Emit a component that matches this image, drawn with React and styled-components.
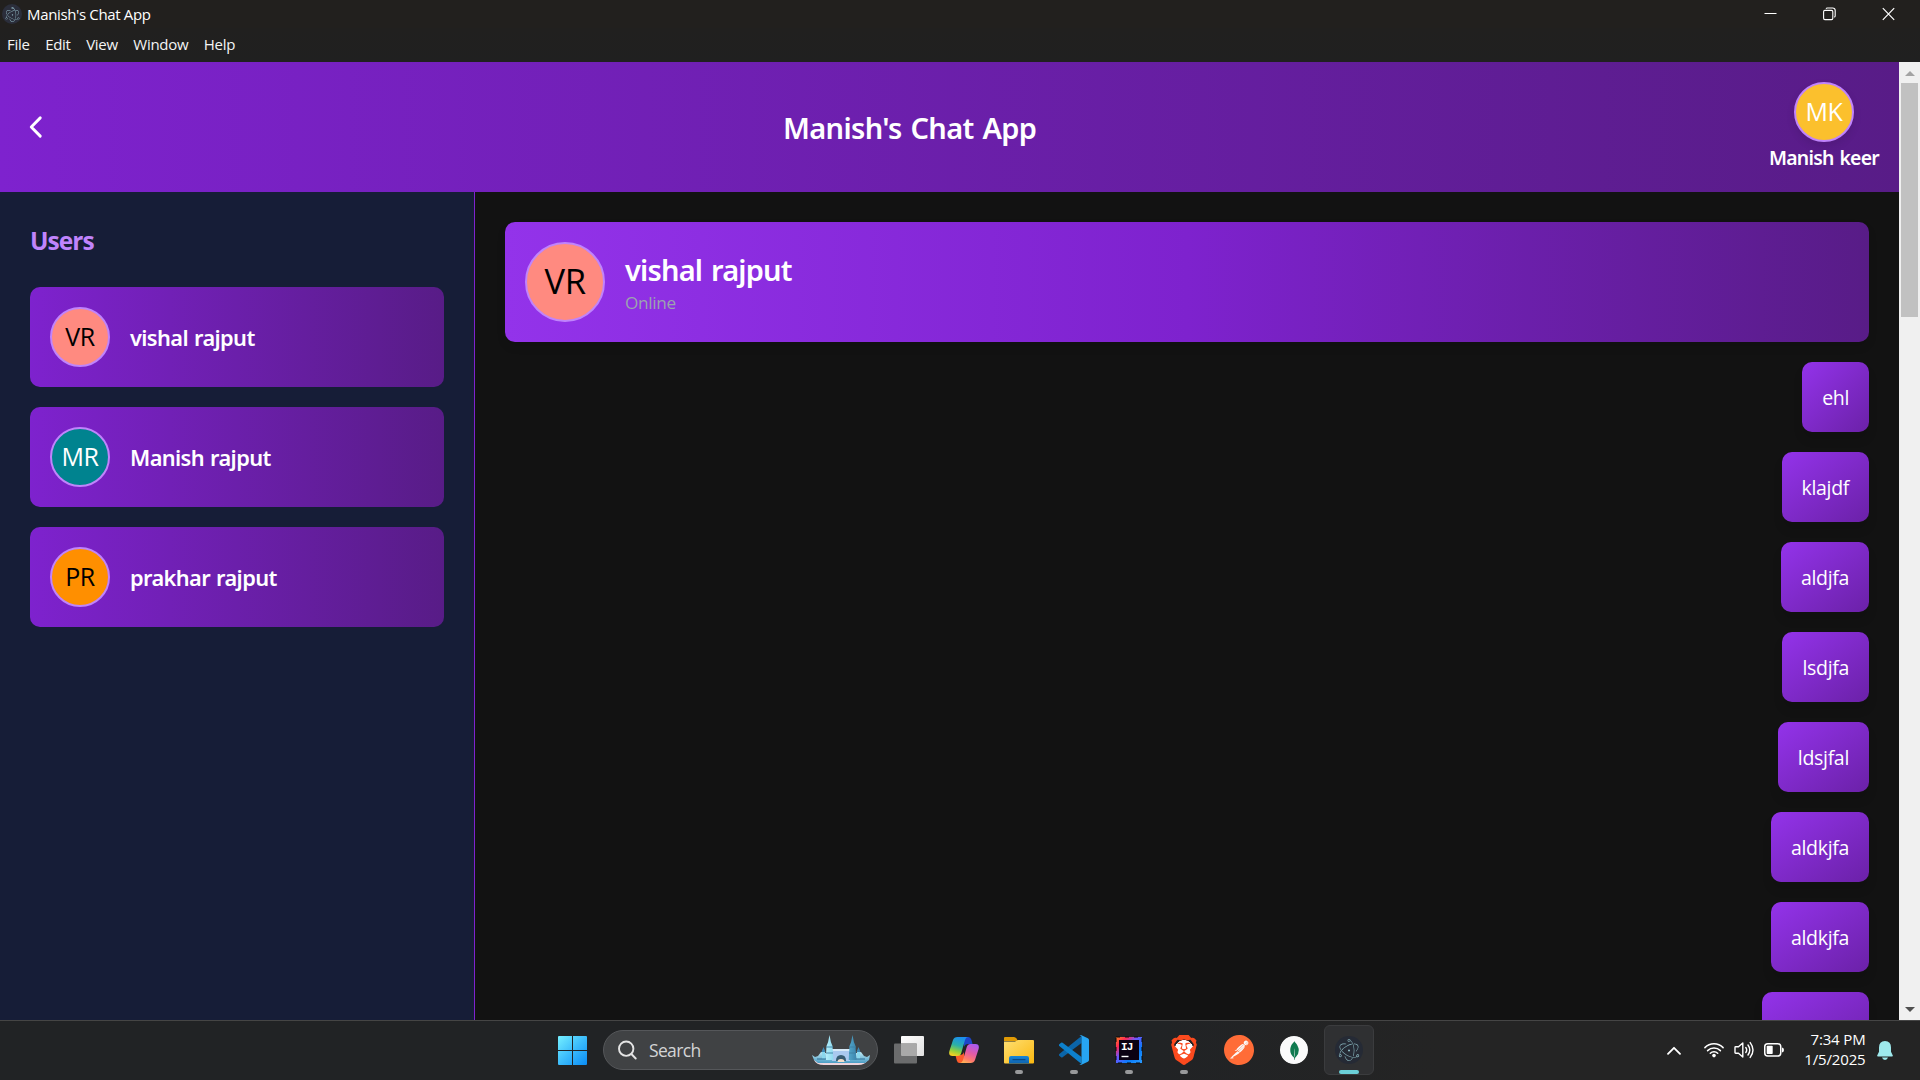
import React from "react";
import styled, { createGlobalStyle } from "styled-components";
import { SiElectron, SiBrave, SiPostman, SiMongodb } from "react-icons/si";

const GlobalStyle = createGlobalStyle`
  *, *::before, *::after { box-sizing: border-box; }
  body {
    margin: 0;
    background: #121212;
    font-family: "Open Sans", "Noto Sans", sans-serif;
    color: #fff;
    overflow: hidden;
  }
  svg { display: block; flex: none; }
  h1, h2, h3, p { margin: 0; }
`;

const Desktop = styled.div`
  width: 1920px;
  height: 1080px;
  display: flex;
  flex-direction: column;
  overflow: hidden;
`;

/* ---------- window frame ---------- */
const TitleBar = styled.div`
  height: 28px;
  flex: none;
  display: flex;
  align-items: center;
  background: #22201e;
`;
const AppBadge = styled.span`
  width: 20px;
  height: 20px;
  margin-left: 2px;
  border-radius: 50%;
  display: grid;
  place-items: center;
  background: #2b2e3b;
  color: #9bc4cf;
`;
const WindowTitle = styled.span`
  margin-left: 5px;
  font-size: 15px;
  line-height: 28px;
  letter-spacing: -0.35px;
`;
const WindowControls = styled.div`
  margin-left: auto;
  display: flex;
  gap: 46px;
  padding-right: 25px;
`;
const MenuBar = styled.nav`
  height: 34px;
  flex: none;
  display: flex;
  gap: 15.6px;
  padding-left: 7px;
  background: linear-gradient(#21201f, #202020);
`;
const MenuItem = styled.span`
  font-size: 15px;
  line-height: 33px;
  letter-spacing: -0.3px;
  color: #f4f4f4;
`;

/* ---------- app ---------- */
const Viewport = styled.div`
  height: 958px;
  flex: none;
  display: flex;
`;
const Page = styled.div`
  flex: 1;
  display: flex;
  flex-direction: column;
  min-width: 0;
`;
const Header = styled.header`
  height: 130px;
  flex: none;
  padding: 20px;
  display: flex;
  align-items: center;
  justify-content: space-between;
  background: linear-gradient(to right, #7e22ce, #581c87);
`;
const AppTitle = styled.h1`
  width: 254px;
  padding-top: 2px;
  white-space: nowrap;
  font-family: "Noto Sans", "Open Sans", sans-serif;
  font-size: 29px;
  line-height: 40px;
  font-weight: 600;
  letter-spacing: -0.65px;
  word-spacing: 2px;
`;
const Profile = styled.div`
  width: 110px;
  height: 90px;
  display: flex;
  flex-direction: column;
  align-items: center;
`;
const ProfileName = styled.span`
  padding-top: 1px;
  white-space: nowrap;
  font-family: "Noto Sans", "Open Sans", sans-serif;
  font-size: 19.4px;
  line-height: 30px;
  font-weight: 600;
  letter-spacing: -0.75px;
  word-spacing: 1.5px;
`;
const Avatar = styled.div`
  width: ${(p) => p.$size}px;
  height: ${(p) => p.$size}px;
  flex: none;
  display: flex;
  align-items: center;
  justify-content: center;
  padding-bottom: ${(p) => (p.$size > 60 ? 2 : 1)}px;
  border: 2px solid #c084fc;
  border-radius: 50%;
  background: ${(p) => p.$bg};
  color: ${(p) => p.$fg};
  font-size: ${(p) => (p.$size > 60 ? 34.5 : 25)}px;
  letter-spacing: -0.4px;
  line-height: 1;
  box-shadow: ${(p) => (p.$raised ? "0 4px 8px rgba(0, 0, 0, 0.1)" : "none")};
`;
const Body = styled.div`
  flex: 1;
  display: flex;
  min-height: 0;
`;
const Sidebar = styled.aside`
  width: 475px;
  flex: none;
  padding: 30px;
  background: #161d37;
  border-right: 1px solid #7e22ce;
`;
const SidebarTitle = styled.h2`
  height: 35px;
  padding-top: 1px;
  font-size: 24.5px;
  line-height: 35px;
  margin-bottom: 30px;
  font-weight: 700;
  letter-spacing: -0.95px;
  color: #c084fc;
`;
const UserList = styled.div`
  display: flex;
  flex-direction: column;
  gap: 20px;
`;
const UserCard = styled.div`
  height: 100px;
  padding: 20px;
  display: flex;
  align-items: center;
  gap: 20px;
  border-radius: 10px;
  background: linear-gradient(to right, #7e22ce, #581c87);
`;
const UserName = styled.span`
  padding-top: 1px;
  font-family: "Noto Sans", "Open Sans", sans-serif;
  font-size: 21.8px;
  font-weight: 600;
  letter-spacing: -0.62px;
  word-spacing: 1px;
`;
const Chat = styled.main`
  flex: 1;
  padding: 30px 30px 0;
  display: flex;
  flex-direction: column;
  align-items: flex-end;
  gap: 20px;
  overflow: hidden;
  background: #121212;
`;
const ChatHeader = styled.section`
  align-self: stretch;
  height: 120px;
  flex: none;
  padding: 20px;
  display: flex;
  align-items: center;
  gap: 20px;
  border-radius: 10px;
  background: linear-gradient(to right, #9333ea, #7e22ce, #581c87);
  box-shadow: 0 5px 8px rgba(0, 0, 0, 0.1);
`;
const Contact = styled.div`
  padding-bottom: 1px;
`;
const ContactName = styled.h3`
  font-family: "Noto Sans", "Open Sans", sans-serif;
  font-size: 29px;
  line-height: 42px;
  font-weight: 600;
  letter-spacing: -0.8px;
  word-spacing: 2px;
`;
const ContactStatus = styled.p`
  padding-top: 1px;
  font-size: 17.2px;
  line-height: 22px;
  letter-spacing: -0.35px;
  color: #9ca3af;
`;
const Message = styled.div`
  height: 70px;
  width: ${(p) => (p.$width ? `${p.$width}px` : "auto")};
  flex: none;
  padding: 21px 20px 19px;
  border-radius: 10px;
  font-size: 19.5px;
  line-height: 30px;
  letter-spacing: -0.32px;
  background: linear-gradient(to bottom right, #9333ea, #6b21a8);
  box-shadow: 0 8px 10px rgba(0, 0, 0, 0.1);
`;
const Scrollbar = styled.div`
  width: 21px;
  flex: none;
  display: flex;
  flex-direction: column;
  align-items: center;
  padding: 9px 0 8px 0;
  background: #f0f0f0;
`;
const ScrollThumb = styled.div`
  width: 17px;
  height: 234px;
  margin: 7px 0 auto;
  background: #c1c1c1;
`;

/* ---------- taskbar ---------- */
const Taskbar = styled.footer`
  height: 60px;
  flex: none;
  padding: 0 25px 0 545px;
  display: flex;
  align-items: center;
  background: linear-gradient(to right, #212325 0%, #212325 60%, #242424 75%);
  box-shadow: inset 0 1px 0 #454545;
`;
const Slot = styled.div`
  position: relative;
  width: 55px;
  height: 60px;
  flex: none;
  display: grid;
  place-items: center;
`;
const ActiveTile = styled.div`
  width: 50px;
  height: 50px;
  display: grid;
  place-items: center;
  border-radius: 6px;
  border: 1px solid #3b3c3e;
  background: #2f3032;
`;
const TileIcon = styled.span`
  width: 28px;
  height: 28px;
  border-radius: 50%;
  display: grid;
  place-items: center;
  background: #252a35;
  color: #8cb9c1;
`;
const RunMark = styled.i`
  position: absolute;
  bottom: 6px;
  left: 50%;
  transform: translateX(-50%);
  width: ${(p) => (p.$active ? 20 : 8)}px;
  height: 4px;
  border-radius: 2px;
  background: ${(p) => (p.$active ? "#6bd0d8" : "#98999b")};
`;
const SearchBox = styled.div`
  width: 275px;
  height: 40px;
  margin: 0 3.5px 0 3px;
  padding: 0 7px 0 14px;
  display: flex;
  align-items: center;
  border-radius: 20px;
  border: 1px solid #55575a;
  background: #404244;
`;
const SearchLabel = styled.span`
  margin-left: 12px;
  font-size: 17.5px;
  letter-spacing: -0.65px;
  color: #d3d4d5;
`;
const SearchArt = styled.span`
  margin-left: auto;
`;
const DiscIcon = styled.span`
  width: ${(p) => p.$size}px;
  height: ${(p) => p.$size}px;
  border-radius: 50%;
  display: grid;
  place-items: center;
  background: radial-gradient(circle, #fafafa ${(p) => p.$fill}px, transparent ${(p) => p.$fill + 0.7}px);
  color: ${(p) => p.$color};
`;
const BraveIcon = styled.span`
  display: grid;
  place-items: center;
  width: 30px;
  height: 30px;
  color: #fb4a1e;
  background: radial-gradient(circle at 50% 48%, #fff 9px, transparent 9.5px);
`;
const Tray = styled.div`
  margin-left: auto;
  display: flex;
  align-items: center;
`;
const TrayIcon = styled.span`
  margin-right: ${(p) => p.$gap}px;
`;
const Clock = styled.div`
  width: 64px;
  margin-right: 11.5px;
  display: flex;
  flex-direction: column;
  align-items: flex-end;
  padding-bottom: 2px;
  font-size: 15px;
  line-height: 20px;
  letter-spacing: -0.15px;
`;

/* ---------- drawings ---------- */
const stroke = { fill: "none", stroke: "#fff", strokeLinecap: "round", strokeLinejoin: "round" };

const BackIcon = () => (
  <svg width="31" height="30" viewBox="0 0 24.8 24" {...stroke} strokeWidth="2.3">
    <path d="M16.200 19.300 9 12l7.200-7.300" />
  </svg>
);
const MinimizeIcon = () => (
  <svg width="13" height="14" viewBox="0 0 13 14"><path d="M0.5 6.5h12" stroke="#fff" /></svg>
);
const RestoreIcon = () => (
  <svg width="13" height="14" viewBox="0 0 13 14" fill="none" stroke="#fff" strokeWidth="1.1">
    <rect x="0.6" y="3.4" width="9.2" height="9.2" rx="1.3" />
    <path d="M3 1.6Q3.4 1 4.4 1h5.2q2.6 0 2.6 2.6v5.2q0 1-.9 1.5" />
  </svg>
);
const CloseIcon = () => (
  <svg width="13" height="14" viewBox="0 0 13 14"><path d="m.8 1.2 11.4 11.6M12.2 1.2.8 12.8" stroke="#fff" strokeWidth="1.2" /></svg>
);
const ScrollArrow = ({ down }) => (
  <svg width="10" height="5" viewBox="0 0 10 5">
    <path d={down ? "M0 0h10L5 5z" : "M0 5h10L5 0z"} fill={down ? "#505050" : "#a3a3a3"} />
  </svg>
);
const StartIcon = () => (
  <svg width="29" height="29" viewBox="0 0 29 29">
    <defs>
      <linearGradient id="win" x1="0" y1="0" x2="29" y2="29" gradientUnits="userSpaceOnUse">
        <stop stopColor="#75f0ff" /><stop offset="0.5" stopColor="#3cbcfb" /><stop offset="1" stopColor="#0a8cf5" />
      </linearGradient>
    </defs>
    <path fill="url(#win)" d="M1 0h13v14H0V1q0-1 1-1zM15 0h13q1 0 1 1v13H15zM0 15h14v14H1q-1 0-1-1zM15 15h14v13q0 1-1 1H15z" />
  </svg>
);
const SearchIcon = () => (
  <svg width="19" height="20" viewBox="0 0 19 20" fill="none" stroke="#e4e4e4" strokeWidth="1.9" strokeLinecap="round">
    <circle cx="8.2" cy="8.7" r="7.2" /><path d="m13.4 14 4.3 4.5" />
  </svg>
);
const CastleArt = () => (
  <svg width="58" height="32" viewBox="0 0 58 32">
    <defs>
      <linearGradient id="tower" x1="0" x2="1">
        <stop stopColor="#b5effb" /><stop offset="0.5" stopColor="#68c5e4" /><stop offset="1" stopColor="#3c86ae" />
      </linearGradient>
      <linearGradient id="bridge" x1="0" y1="0" x2="0" y2="1">
        <stop stopColor="#bfeaf6" /><stop offset="1" stopColor="#4b9dc4" />
      </linearGradient>
    </defs>
    <path d="M2 26q27 3 54 0-3 5-10 5H12q-8 0-10-5z" fill="#eed5dc" />
    <path d="M0 21l3 2 3-1 3-4 5 1 3 2h24l3-2 5-1 3 4 3 1 3-2-1 5-4 3H6l-4-3z" fill="url(#bridge)" />
    <path d="M10 17h3v8h-3zM45 17h3v8h-3z" fill="#8ad8ee" />
    <path d="M11.5 13l2 5h-4zM46.500 13l2 5h-4z" fill="#3e88b6" />
    <path d="M20 16h18v11h-4q0-6-5-6t-5 6h-4z" fill="#a9c9ef" />
    <path d="M20 15h18v2H20z" fill="#d7eaf8" />
    <path d="M24 27q0-6 5-6t5 6z" fill="#375b71" /><path d="M25.500 28q0-3 3.500-3t3.500 3z" fill="#f3dfcb" />
    <path d="M17.500 1l1.400 7 1.600 4 .8 14h-7.600l.8-14 1.600-4zM40.500 1l1.400 7 1.600 4 .8 14h-7.600l.8-14 1.600-4z" fill="url(#tower)" />
    <path d="M14 13h7M14 19h7M37 13h7M37 19h7" stroke="#3d7fa3" strokeWidth="0.900" />
    <path d="M5 25h9M44 25h9" stroke="#2f6f96" strokeWidth="1.200" />
  </svg>
);
const TaskViewIcon = () => (
  <svg width="30" height="30" viewBox="0 0 30 30">
    <defs><linearGradient id="tv" x1="0" y1="0" x2="1" y2="1"><stop stopColor="#fff" /><stop offset="1" stopColor="#e0e0e0" /></linearGradient></defs>
    <rect x="7" y="1" width="23" height="20" rx="1" fill="url(#tv)" />
    <rect x="0" y="8.500" width="23" height="20" rx="1" fill="#6b6c6d" />
    <path d="M7 8.500h15q1 0 1 1V21H8q-1 0-1-1z" fill="#a9a9a9" />
  </svg>
);
const CopilotIcon = () => (
  <svg width="30" height="28" viewBox="0 0 30 28">
    <defs>
      <linearGradient id="cpA" x1="0.600" y1="0" x2="0.300" y2="1"><stop stopColor="#1b8df0" /><stop offset="0.450" stopColor="#2bb0a8" /><stop offset="0.750" stopColor="#8fd03f" /><stop offset="1" stopColor="#f7cf22" /></linearGradient>
      <linearGradient id="cpB" x1="0.700" y1="0" x2="0.300" y2="1"><stop stopColor="#a95af0" /><stop offset="0.450" stopColor="#e25aa6" /><stop offset="0.800" stopColor="#ff7a6b" /><stop offset="1" stopColor="#ffb057" /></linearGradient>
    </defs>
    <path d="M15 1h4.500q2 0 2.800 2.500L23.600 8H19q-3 0-4 3z" fill="#1c45c9" />
    <path d="M15 27h-4.500q-2 0-2.700-2.500L6.400 19H11q3 0 4-3z" fill="#fb5b2b" />
    <path d="M8.500 1H19q-2.200 0-3 3l-3.600 12.500Q11.600 20 8.500 20H3.500Q-.8 20 .4 15L4 4Q5 1 8.500 1z" fill="url(#cpA)" />
    <path d="M21.500 27H11q2.200 0 3-3l3.600-12.500Q18.400 8 21.500 8h5Q30.800 8 29.600 13L26 24q-1 3-4.500 3z" fill="url(#cpB)" />
  </svg>
);
const FolderIcon = () => (
  <svg width="30" height="28" viewBox="0 0 30 28">
    <defs>
      <linearGradient id="fold" x1="0" y1="0" x2="1" y2="1"><stop stopColor="#ffdf72" /><stop offset="1" stopColor="#fbb810" /></linearGradient>
      <linearGradient id="foldTab" x1="0" y1="0" x2="0" y2="1"><stop stopColor="#1a87d8" /><stop offset="1" stopColor="#0d62ae" /></linearGradient>
    </defs>
    <path d="M1 1h9q1.500 0 2.500 1.500L14 5H0V2q0-1 1-1z" fill="#e09a05" />
    <path d="M0 5.500h11L14 4h15q1 0 1 1v21.500q0 1-1 1H1q-1 0-1-1z" fill="url(#fold)" />
    <path d="M5 27.500V22q0-2 2-2h16q2 0 2 2v5.500z" fill="url(#foldTab)" />
    <path d="M9 23.700h12" stroke="#0b4a87" strokeWidth="1.200" strokeLinecap="round" />
  </svg>
);
const VsCodeIcon = () => (
  <svg width="30" height="30" viewBox="0 0 100 100">
    <path d="M75 3 1 63a4 4 0 0 0 0 6l6 5a4 4 0 0 0 5 0L75 27z" fill="#0b65a9" />
    <path d="M75 97 1 37a4 4 0 0 1 0-6l6-5a4 4 0 0 1 5 0l63 47z" fill="#0d80cc" />
    <path d="M75 99a6 6 0 0 1-7-1q6 1 7-4V6q-1-5-7-4a6 6 0 0 1 7-1l21 10q4 2 4 6v66q0 4-4 6z" fill="#27a5f2" />
  </svg>
);
const IdeaText = styled.text`
  font-family: "Liberation Mono", monospace;
  font-size: 11px;
  font-weight: 700;
  letter-spacing: -0.8px;
`;
const IdeaIcon = () => (
  <svg width="28" height="28" viewBox="0 0 28 28">
    <defs><linearGradient id="ij" x1="0" y1="0" x2="1" y2="1"><stop stopColor="#fc801d" /><stop offset="0.220" stopColor="#fe2857" /><stop offset="0.420" stopColor="#6b57ff" /><stop offset="0.700" stopColor="#087cfa" /><stop offset="1" stopColor="#2a9bff" /></linearGradient></defs>
    <rect x="1" y="1" width="26" height="26" fill="url(#ij)" />
    <rect x="1" y="1" width="26" height="26" fill="none" stroke="#08080f" strokeWidth="1" strokeDasharray="4 5" />
    <rect x="4" y="4" width="20" height="20" fill="#0b0212" />
    <IdeaText x="6" y="14" fill="#fff">IJ</IdeaText>
    <path d="M6.500 20.500h7" stroke="#fff" strokeWidth="1.400" />
  </svg>
);
const ChevronUp = () => (
  <svg width="14" height="9" viewBox="0 0 14 9" {...stroke} strokeWidth="1.800"><path d="m1 7.800 6-6 6 6" /></svg>
);
const WifiIcon = () => (
  <svg width="20" height="16" viewBox="0 0 20 16" {...stroke} strokeWidth="1.500">
    <path d="M.9 5.600a12.900 12.900 0 0 1 18.200 0M3.600 8.600a9 9 0 0 1 12.800 0M6.300 11.300a5.200 5.200 0 0 1 7.400 0" />
    <circle cx="10" cy="13.600" r="1.800" fill="#fff" stroke="none" />
  </svg>
);
const VolumeIcon = () => (
  <svg width="20" height="18" viewBox="0 0 20 18" {...stroke} strokeWidth="1.400">
    <path d="M1 6.500q0-.7.700-.7h2.800L8.800 2v14l-4.300-3.800H1.700q-.7 0-.7-.7z" />
    <path d="M11.800 6.500q1.800 2.500 0 5M14 4q3.600 5 0 10M16.200 1.600q5.600 7.400 0 14.800" />
  </svg>
);
const BatteryIcon = () => (
  <svg width="20" height="14" viewBox="0 0 20 14">
    <rect x="0.750" y="0.750" width="16" height="12.300" rx="3" fill="none" stroke="#fff" strokeWidth="1.500" />
    <rect x="2.700" y="2.800" width="6" height="8.200" rx="0.800" fill="#fff" />
    <path d="M18 4.500q2 .3 2 2.500t-2 2.500z" fill="#fff" />
  </svg>
);
const BellIcon = () => (
  <svg width="16" height="19" viewBox="0 0 16 19" fill="#9ee9ec">
    <path d="M8 0q6 .3 6 6.500v4.300l1.800 3.600q.3 1-.8 1H1q-1.100 0-.8-1L2 10.800V6.500Q2 .3 8 0zM5 16.600h6q-.7 2.400-3 2.400t-3-2.400z" />
  </svg>
);

/* ---------- data ---------- */
const menu = ["File", "Edit", "View", "Window", "Help"];
const users = [
  { name: "vishal rajput", initials: "VR", bg: "#ff8a80", fg: "#000" },
  { name: "Manish rajput", initials: "MR", bg: "#00838f", fg: "#fff" },
  { name: "prakhar rajput", initials: "PR", bg: "#ff8f00", fg: "#000" },
];
const messages = ["ehl", "klajdf", "aldjfa", "lsdjfa", "ldsjfal", "aldkjfa", "aldkjfa"];

export default function App() {
  return (
    <Desktop>
      <GlobalStyle />
      <TitleBar>
        <AppBadge><SiElectron size={15} /></AppBadge>
        <WindowTitle>Manish's Chat App</WindowTitle>
        <WindowControls><MinimizeIcon /><RestoreIcon /><CloseIcon /></WindowControls>
      </TitleBar>
      <MenuBar>{menu.map((m) => <MenuItem key={m}>{m}</MenuItem>)}</MenuBar>
      <Viewport>
        <Page>
          <Header>
            <BackIcon />
            <AppTitle>Manish's Chat App</AppTitle>
            <Profile>
              <Avatar $raised $size={60} $bg="#fbc02d" $fg="#fff">MK</Avatar>
              <ProfileName>Manish keer</ProfileName>
            </Profile>
          </Header>
          <Body>
            <Sidebar>
              <SidebarTitle>Users</SidebarTitle>
              <UserList>
                {users.map((u) => (
                  <UserCard key={u.name}>
                    <Avatar $size={60} $bg={u.bg} $fg={u.fg}>{u.initials}</Avatar>
                    <UserName>{u.name}</UserName>
                  </UserCard>
                ))}
              </UserList>
            </Sidebar>
            <Chat>
              <ChatHeader>
                <Avatar $size={80} $bg="#ff8a80" $fg="#000">VR</Avatar>
                <Contact>
                  <ContactName>vishal rajput</ContactName>
                  <ContactStatus>Online</ContactStatus>
                </Contact>
              </ChatHeader>
              {messages.map((m, i) => <Message key={i}>{m}</Message>)}
              <Message $width={107} />
            </Chat>
          </Body>
        </Page>
        <Scrollbar>
          <ScrollArrow />
          <ScrollThumb />
          <ScrollArrow down />
        </Scrollbar>
      </Viewport>
      <Taskbar>
        <Slot><StartIcon /></Slot>
        <SearchBox>
          <SearchIcon />
          <SearchLabel>Search</SearchLabel>
          <SearchArt><CastleArt /></SearchArt>
        </SearchBox>
        <Slot><TaskViewIcon /></Slot>
        <Slot><CopilotIcon /></Slot>
        <Slot><FolderIcon /><RunMark /></Slot>
        <Slot><VsCodeIcon /><RunMark /></Slot>
        <Slot><IdeaIcon /><RunMark /></Slot>
        <Slot><BraveIcon><SiBrave size={30} /></BraveIcon><RunMark /></Slot>
        <Slot><DiscIcon $size={30} $fill={13} $color="#ff6c37"><SiPostman size={30} /></DiscIcon></Slot>
        <Slot><DiscIcon $size={28} $fill={14} $color="#0f7a4f"><SiMongodb size={19} /></DiscIcon></Slot>
        <Slot>
          <ActiveTile><TileIcon><SiElectron size={22} /></TileIcon></ActiveTile>
          <RunMark $active />
        </Slot>
        <Tray>
          <TrayIcon $gap={23}><ChevronUp /></TrayIcon>
          <TrayIcon $gap={10}><WifiIcon /></TrayIcon>
          <TrayIcon $gap={10}><VolumeIcon /></TrayIcon>
          <TrayIcon $gap={18}><BatteryIcon /></TrayIcon>
          <Clock><span>7:34 PM</span><span>1/5/2025</span></Clock>
          <TrayIcon $gap={2}><BellIcon /></TrayIcon>
        </Tray>
      </Taskbar>
    </Desktop>
  );
}
